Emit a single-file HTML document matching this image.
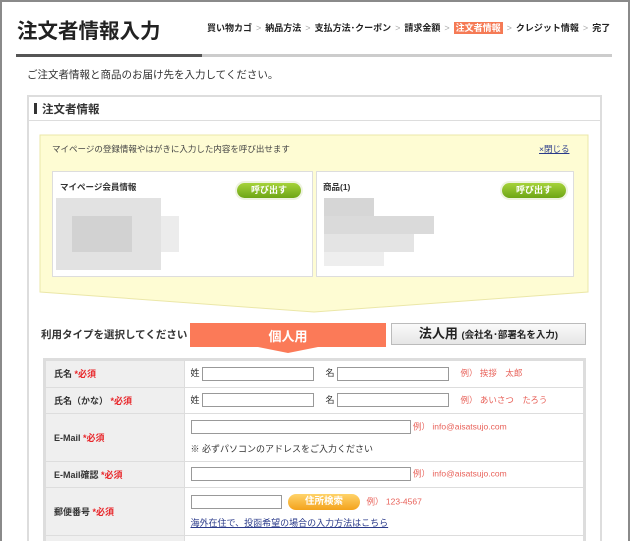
<!DOCTYPE html>
<html><head><meta charset="utf-8"><style>
*{box-sizing:border-box;margin:0;padding:0}
html,body{width:630px;height:541px;overflow:hidden}
body{background:#fff;font-family:"Liberation Sans","Noto Sans CJK JP",sans-serif;color:#333;position:relative}
.frame{position:absolute;left:0;top:0;width:630px;height:541px;border:2px solid #8a8a8a;border-bottom:none}
.a{position:absolute;white-space:nowrap}
.b{font-weight:bold}
.crumb{font-size:9px;font-weight:bold;color:#222}
.crumb .s{color:#aaa;font-weight:normal;margin:0 4px}
.crumb .on{background:#f57a55;color:#fff;padding:1px 2px}
.btn{position:absolute;width:64px;height:15px;border-radius:8px;background:linear-gradient(#a5d23a,#6ea515);color:#fff;font-size:9px;font-weight:bold;text-align:center;line-height:15px;box-shadow:0 0 0 2px #eef3e0}
.blur{position:absolute}
td{border-bottom:1px solid #ddd;font-size:9px;vertical-align:middle}
.lab{background:#efefef;width:138px;padding-left:8px;font-weight:bold;color:#333;border-right:1px solid #ddd}
.req{color:#e8262a}
.in{display:inline-block;border:1px solid #999;height:14px;vertical-align:middle;background:#fff}
.ex{color:#e8625a;font-size:8.5px}
</style></head><body>
<div class="frame"></div>
<div class="a b" style="left:17px;top:14px;font-size:20.5px;color:#222">注文者情報入力</div>
<div class="a crumb" style="left:207px;top:21px">買い物カゴ<span class="s">&gt;</span>納品方法<span class="s">&gt;</span>支払方法･クーポン<span class="s">&gt;</span>請求金額<span class="s">&gt;</span><span class="on">注文者情報</span><span class="s">&gt;</span>クレジット情報<span class="s">&gt;</span>完了</div>
<div class="a" style="left:16px;top:54px;width:186px;height:3px;background:#555"></div>
<div class="a" style="left:202px;top:54px;width:410px;height:3px;background:#ccc"></div>
<div class="a" style="left:27px;top:67px;font-size:10.5px">ご注文者情報と商品のお届け先を入力してください。</div>
<div class="a" style="left:27px;top:95px;width:575px;height:460px;border:2px solid #ddd"></div>
<div class="a" style="left:29px;top:120px;width:571px;height:1px;background:#ddd"></div>
<div class="a" style="left:34px;top:103px;width:3px;height:11px;background:#333"></div>
<div class="a b" style="left:42px;top:101px;font-size:11.5px">注文者情報</div>
<svg class="a" style="left:39px;top:134px" width="551" height="180"><path d="M1 1H549V158L275 178L1 158Z" fill="#fefcd3" stroke="#ebe7a8"/></svg>
<div class="a" style="left:52px;top:143px;font-size:8.5px;color:#444">マイページの登録情報やはがきに入力した内容を呼び出せます</div>
<div class="a" style="left:539px;top:143px;font-size:8.5px;color:#2a3a8a;text-decoration:underline">×閉じる</div>
<div class="a" style="left:52px;top:171px;width:261px;height:106px;background:#fff;border:1px solid #ddd"></div>
<div class="a" style="left:316px;top:171px;width:258px;height:106px;background:#fff;border:1px solid #ddd"></div>
<div class="a b" style="left:60px;top:181px;font-size:8.5px">マイページ会員情報</div>
<div class="a b" style="left:323px;top:181px;font-size:8.5px">商品(1)</div>
<div class="btn" style="left:237px;top:183px">呼び出す</div>
<div class="btn" style="left:502px;top:183px">呼び出す</div>
<div class="blur" style="left:56px;top:198px;width:105px;height:72px;background:#e2e2e2"></div>
<div class="blur" style="left:72px;top:216px;width:60px;height:36px;background:#d2d2d2"></div>
<div class="blur" style="left:161px;top:216px;width:18px;height:36px;background:#ececec"></div>
<div class="blur" style="left:324px;top:198px;width:50px;height:18px;background:#d6d6d6"></div>
<div class="blur" style="left:324px;top:216px;width:110px;height:18px;background:#dadada"></div>
<div class="blur" style="left:324px;top:234px;width:90px;height:18px;background:#e4e4e4"></div>
<div class="blur" style="left:324px;top:252px;width:60px;height:14px;background:#eeeeee"></div>
<div class="a b" style="left:41px;top:327px;font-size:10.5px">利用タイプを選択してください</div>
<svg class="a" style="left:190px;top:323px" width="196" height="30"><path d="M0 0H196V24H128L98 30L68 24H0Z" fill="#fb7a58"/></svg>
<div class="a b" style="left:190px;top:326px;width:196px;text-align:center;font-size:13px;color:#fff">個人用</div>
<div class="a b" style="left:391px;top:323px;width:195px;height:22px;border:1px solid #bbb;background:linear-gradient(#fafafa,#e6e6e6);text-align:center;font-size:13px;line-height:20px;color:#222">法人用 <span style="font-size:9.5px">(会社名･部署名を入力)</span></div>
<div class="a" style="left:43px;top:358px;width:543px;height:190px;border:3px solid #ddd;border-bottom:none">
<table style="border-collapse:collapse;width:100%">
<tr style="height:26px"><td class="lab">氏名 <span class="req">*必須</span></td><td style="padding-left:6px">姓 <span class="in" style="width:112px"></span>　 名 <span class="in" style="width:112px"></span>　 <span class="ex">例） 挨拶　太郎</span></td></tr>
<tr style="height:26px"><td class="lab">氏名（かな） <span class="req">*必須</span></td><td style="padding-left:6px">姓 <span class="in" style="width:112px"></span>　 名 <span class="in" style="width:112px"></span>　 <span class="ex">例） あいさつ　たろう</span></td></tr>
<tr style="height:48px"><td class="lab">E-Mail <span class="req">*必須</span></td><td style="padding-left:6px"><span class="in" style="width:220px"></span> <span class="ex">例） info@aisatsujo.com</span><div style="margin-top:8px">※ 必ずパソコンのアドレスをご入力ください</div></td></tr>
<tr style="height:26px"><td class="lab">E-Mail確認 <span class="req">*必須</span></td><td style="padding-left:6px"><span class="in" style="width:220px"></span> <span class="ex">例） info@aisatsujo.com</span></td></tr>
<tr style="height:48px"><td class="lab">郵便番号 <span class="req">*必須</span></td><td style="padding-left:6px"><span class="in" style="width:91px"></span> <span style="display:inline-block;vertical-align:middle;width:72px;height:16px;border-radius:8px;background:linear-gradient(#ffd36a,#f3a21c);color:#fff;font-weight:bold;text-align:center;line-height:16px;font-size:9.5px;margin:0 4px">住所検索</span> <span class="ex">例） 123-4567</span><div style="margin-top:6px;color:#2a3a8a;text-decoration:underline">海外在住で、投函希望の場合の入力方法はこちら</div></td></tr>
<tr style="height:20px"><td class="lab"></td><td></td></tr>
</table></div>
</body></html>
